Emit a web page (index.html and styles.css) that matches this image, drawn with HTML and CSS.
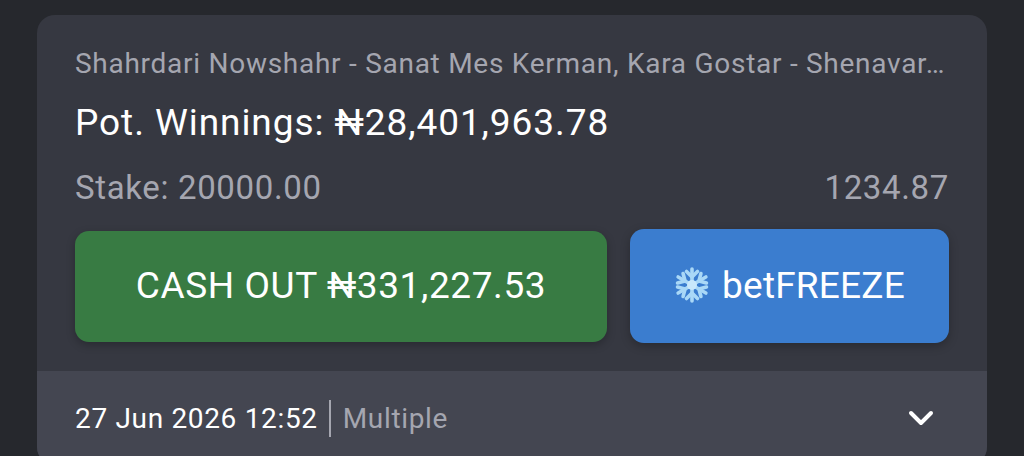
FILE: index.html
```html
<!DOCTYPE html>
<html lang="en">
<head>
    <meta charset="UTF-8">
    <meta name="viewport" content="width=device-width, initial-scale=1.0">
    <title>Cash Out</title>
    <link rel="stylesheet" href="styles.css">
</head>
<body>
    <div class="bet-card">
        <div class="bet-body">
            <div class="bet-matches">Shahrdari Nowshahr - Sanat Mes Kerman, Kara Gostar - Shenavar…</div>
            <div class="bet-winnings">Pot. Winnings: ₦28,401,963.78</div>
            <div class="bet-stake">
                <span>Stake: 20000.00</span>
                <span>1234.87</span>
            </div>
            <div class="bet-actions">
                <button class="btn btn-cashout" type="button">CASH OUT ₦331,227.53</button>
                <button class="btn btn-freeze" type="button">
                    <svg class="flake" viewBox="0 0 36 36" aria-hidden="true">
                        <g fill="none" stroke="#a9d8f7" stroke-width="3.6" stroke-linecap="round" stroke-linejoin="round">
                            <g id="arm">
                                <path d="M18 18V2"/>
                                <path d="M12.5 4.500 18 10l5.500-5.500"/>
                            </g>
                            <use href="#arm" transform="rotate(60 18 18)"/>
                            <use href="#arm" transform="rotate(120 18 18)"/>
                            <use href="#arm" transform="rotate(180 18 18)"/>
                            <use href="#arm" transform="rotate(240 18 18)"/>
                            <use href="#arm" transform="rotate(300 18 18)"/>
                        </g>
                        <circle cx="18" cy="18" r="5" fill="#c9e8fb"/>
                    </svg>
                    <span>betFREEZE</span>
                </button>
            </div>
        </div>
        <div class="bet-footer">
            <div class="bet-meta">
                <span class="bet-date">27 Jun 2026 12:52</span>
                <span class="bet-type">Multiple</span>
            </div>
            <svg class="chevron" viewBox="0 0 26 16" aria-hidden="true">
                <path d="M3 3l10 10L23 3" fill="none" stroke="#fff" stroke-width="4" stroke-linecap="round" stroke-linejoin="round"/>
            </svg>
        </div>
    </div>
</body>
</html>
```

FILE: styles.css
```css
html, body {
    height: 100%;
}

body {
    margin: 0;
    padding: 15px 37px 0;
    box-sizing: border-box;
    overflow: hidden;
    background-color: #26282d;
    font-family: Roboto, "Liberation Sans", sans-serif;
    color: #fff;
}

.bet-card {
    background-color: #363841;
    border-radius: 18px;
    overflow: hidden;
}

.bet-body {
    padding: 32px 38px 28px;
}

.bet-matches {
    font-size: 28px;
    line-height: 34px;
    letter-spacing: 0.73px;
    color: #a5a6b0;
    white-space: nowrap;
}

.bet-winnings {
    margin-top: 22px;
    font-size: 37px;
    line-height: 40px;
    letter-spacing: 0.94px;
}

.bet-stake {
    display: flex;
    justify-content: space-between;
    margin-top: 28px;
    font-size: 33px;
    line-height: 34px;
    letter-spacing: 0.65px;
    color: #a5a6b0;
}

.bet-actions {
    display: flex;
    align-items: center;
    gap: 23px;
    margin-top: 24px;
}

.btn {
    display: flex;
    align-items: center;
    justify-content: center;
    border: none;
    border-radius: 14px;
    color: #fff;
    font-family: inherit;
    font-size: 37px;
    letter-spacing: 0.6px;
    padding: 0 0 2px;
}

.btn-cashout {
    flex: 0 0 532px;
    height: 111px;
    background-color: #387b43;
    box-shadow: 0 3px 8px rgba(0, 0, 0, 0.25);
}

.btn-freeze {
    flex: 1;
    height: 114px;
    gap: 12px;
    background-color: #3b7dcf;
    box-shadow: 0 3px 10px rgba(0, 0, 0, 0.25);
    letter-spacing: 0.2px;
}

.flake {
    width: 36px;
    height: 36px;
}

.bet-footer {
    display: flex;
    align-items: center;
    justify-content: space-between;
    height: 94px;
    padding: 0 38px;
    background-color: #444651;
}

.bet-meta {
    display: flex;
    align-items: center;
    font-size: 28px;
    letter-spacing: 0.67px;
}

.bet-date {
    padding-right: 11px;
    border-right: 2px solid #a5a6b0;
    line-height: 37px;
}

.bet-type {
    padding-left: 12px;
    color: #a5a6b0;
}

.chevron {
    width: 26px;
    height: 16px;
    margin-right: 15px;
}
```
